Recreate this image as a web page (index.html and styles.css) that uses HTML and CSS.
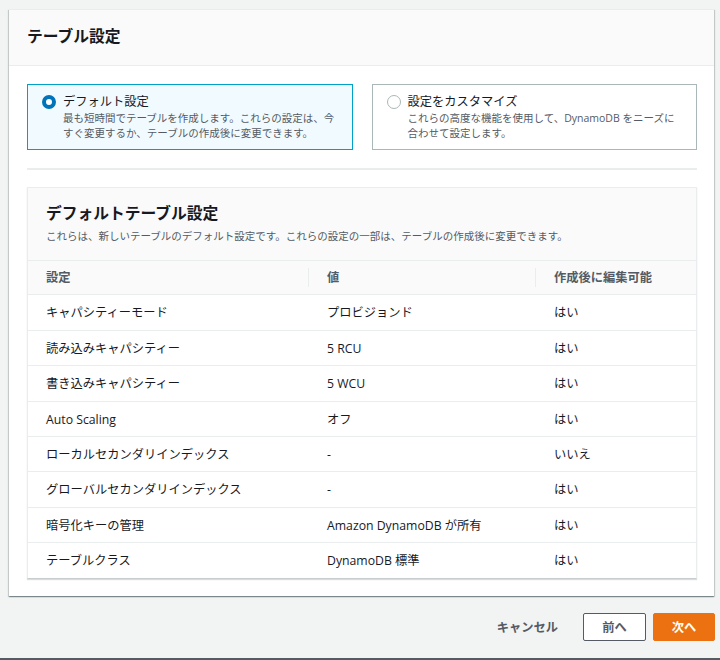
FILE: index.html
```html
<!DOCTYPE html>
<html lang="ja">
<head>
<meta charset="utf-8">
<link rel="stylesheet" href="styles.css">
</head>
<body>
<div class="page">
  <section class="card">
    <header class="card-header"><h2>テーブル設定</h2></header>
    <div class="card-body">
      <div class="tiles">
        <div class="tile selected">
          <span class="radio on"></span>
          <div class="tile-text">
            <div class="tile-label">デフォルト設定</div>
            <div class="tile-desc">最も短時間でテーブルを作成します。これらの設定は、今すぐ変更するか、テーブルの作成後に変更できます。</div>
          </div>
        </div>
        <div class="tile">
          <span class="radio"></span>
          <div class="tile-text">
            <div class="tile-label">設定をカスタマイズ</div>
            <div class="tile-desc">これらの高度な機能を使用して、DynamoDB をニーズに合わせて設定します。</div>
          </div>
        </div>
      </div>
      <hr class="divider">
      <div class="panel">
        <div class="panel-header">
          <h3>デフォルトテーブル設定</h3>
          <p>これらは、新しいテーブルのデフォルト設定です。これらの設定の一部は、テーブルの作成後に変更できます。</p>
        </div>
        <div class="table">
          <div class="row head">
            <div class="cell">設定</div>
            <div class="cell sep">値</div>
            <div class="cell sep">作成後に編集可能</div>
          </div>
          <div class="row"><div class="cell">キャパシティーモード</div><div class="cell">プロビジョンド</div><div class="cell">はい</div></div>
          <div class="row"><div class="cell">読み込みキャパシティー</div><div class="cell">5 RCU</div><div class="cell">はい</div></div>
          <div class="row"><div class="cell">書き込みキャパシティー</div><div class="cell">5 WCU</div><div class="cell">はい</div></div>
          <div class="row"><div class="cell">Auto Scaling</div><div class="cell">オフ</div><div class="cell">はい</div></div>
          <div class="row"><div class="cell">ローカルセカンダリインデックス</div><div class="cell">-</div><div class="cell">いいえ</div></div>
          <div class="row"><div class="cell">グローバルセカンダリインデックス</div><div class="cell">-</div><div class="cell">はい</div></div>
          <div class="row"><div class="cell">暗号化キーの管理</div><div class="cell">Amazon DynamoDB が所有</div><div class="cell">はい</div></div>
          <div class="row last"><div class="cell">テーブルクラス</div><div class="cell">DynamoDB 標準</div><div class="cell">はい</div></div>
        </div>
      </div>
    </div>
  </section>
  <div class="actions">
    <button class="btn-link">キャンセル</button>
    <button class="btn">前へ</button>
    <button class="btn primary">次へ</button>
  </div>
</div>
<div class="footer-line"></div>
</body>
</html>
```

FILE: styles.css
```css
html, body {
  margin: 0;
  padding: 0;
}
body {
  background: #f2f3f3;
  font-family: "Open Sans", "Noto Sans CJK JP", sans-serif;
  font-size: 12.25px;
  color: #16191f;
  height: 660px;
  position: relative;
  overflow: hidden;
}
.page {
  padding: 9px 6px 0 9px;
}
.card {
  background: #fff;
  box-shadow: 0 1px 1px 0 rgba(0, 28, 36, 0.3), 1px 1px 1px 0 rgba(0, 28, 36, 0.15), -1px 1px 1px 0 rgba(0, 28, 36, 0.15);
  border-top: 1px solid #eaeded;
}
.card-header {
  background: #fafafa;
  border-bottom: 1px solid #eaeded;
  height: 56px;
  box-sizing: border-box;
  display: flex;
  align-items: center;
  padding: 0 18px 4px;
}
.card-header h2 {
  margin: 0;
  font-size: 15.75px;
  font-weight: 700;
  line-height: 22px;
  color: #16191f;
}
.card-body {
  padding: 18px 17px 17px 18px;
}
.tiles {
  display: flex;
  gap: 19px;
}
.tile {
  flex: 1;
  display: flex;
  align-items: flex-start;
  gap: 7px;
  border: 1px solid #aab7b8;
  padding: 7px 13px 8px 14px;
  min-height: 49px;
}
.tile.selected {
  border-color: #00a1c9;
  background: #f1faff;
}
.radio {
  flex: none;
  width: 14px;
  height: 14px;
  box-sizing: border-box;
  border-radius: 50%;
  border: 1px solid #aab7b8;
  background: #fff;
  margin-top: 3px;
}
.radio.on {
  border: 4px solid #0073bb;
}
.tile-label {
  font-size: 12.25px;
  line-height: 20px;
  color: #16191f;
}
.tile-desc {
  font-size: 10.5px;
  line-height: 15px;
  color: #545b64;
  margin-top: -1px;
}
.divider {
  border: 0;
  height: 2px;
  background: #eaeded;
  margin: 18px 0 17px;
}
.panel {
  border: 1px solid #eaeded;
  border-bottom-color: #c7cdcf;
  box-shadow: 0 1px 1px 0 rgba(0, 28, 36, 0.15);
}
.panel-header {
  background: #fafafa;
  border-bottom: 1px solid #eaeded;
  padding: 13px 18px 16px;
}
.panel-header h3 {
  margin: 0;
  font-size: 15.75px;
  font-weight: 700;
  line-height: 24px;
}
.panel-header p {
  margin: 3px 0 0;
  font-size: 10.5px;
  line-height: 16px;
  color: #545b64;
}
.row {
  display: grid;
  grid-template-columns: 280px 227px 1fr;
  border-bottom: 1px solid #eaeded;
}
.row.last {
  border-bottom: 0;
}
.row.head {
  background: #fafafa;
}
.row.head .cell {
  font-weight: 700;
  color: #545b64;
  padding-top: 7px;
  padding-bottom: 7px;
}
.cell {
  padding: 8px 18px 7px 18px;
  line-height: 19.4px;
  position: relative;
}
.row.head .cell.sep::before {
  content: "";
  position: absolute;
  left: 0;
  top: 7px;
  bottom: 7px;
  border-left: 1px solid #eaeded;
}
.row .cell:nth-child(2),
.row .cell:nth-child(3) {
  padding-left: 19px;
}
.actions {
  display: flex;
  justify-content: flex-end;
  align-items: center;
  margin-top: 17px;
  margin-right: -1px;
  gap: 7px;
}
.actions button {
  font-family: inherit;
  font-size: 12.25px;
  font-weight: 700;
  height: 28px;
  cursor: pointer;
}
.btn-link {
  border: 0;
  background: transparent;
  color: #545b64;
  padding: 0 18px;
}
.btn {
  width: 63px;
  border: 1px solid #545b64;
  background: #fff;
  color: #545b64;
  border-radius: 2px;
  padding: 0;
}
.btn.primary {
  width: 62px;
  background: #ec7211;
  border-color: #ec7211;
  color: #fff;
}
.footer-line {
  position: absolute;
  left: 0;
  right: 0;
  bottom: 0;
  height: 2px;
  background: #545b64;
}
```
